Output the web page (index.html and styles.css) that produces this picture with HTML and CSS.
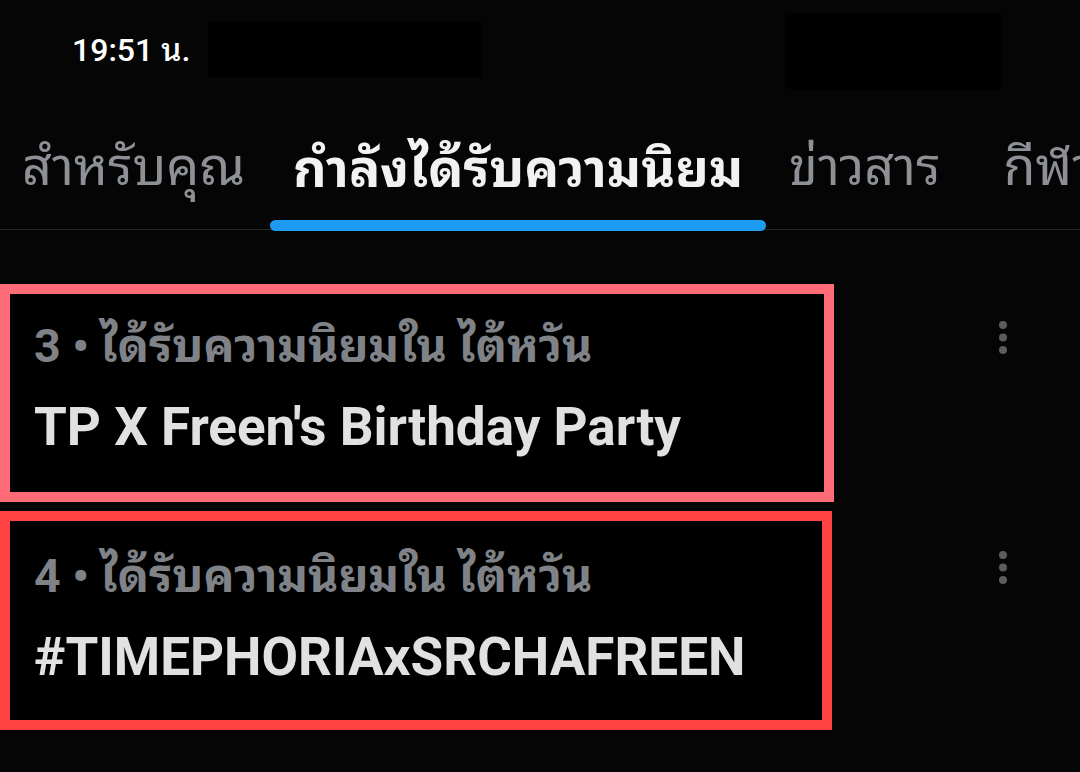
FILE: index.html
```html
<!DOCTYPE html>
<html lang="th">
<head>
<meta charset="utf-8">
<title>กำลังได้รับความนิยม</title>
<link rel="stylesheet" href="styles.css">
</head>
<body>
<div class="screen">
  <div class="status">
    <span class="time">19:51 น.</span>
    <span class="redact redact-a"></span>
    <span class="redact redact-b"></span>
  </div>

  <nav class="tabs">
    <div class="tab"><span class="tab-label">สำหรับคุณ</span></div>
    <div class="tab active"><span class="tab-label">กำลังได้รับความนิยม</span><span class="tab-bar"></span></div>
    <div class="tab"><span class="tab-label">ข่าวสาร</span></div>
    <div class="tab tab-sport"><span class="tab-label">กีฬา</span></div>
  </nav>

  <section class="trends">
    <div class="trend">
      <div class="trend-box pink">
        <div class="meta">3 • ได้รับความนิยมใน ไต้หวัน</div>
        <div class="title">TP X Freen's Birthday Party</div>
      </div>
      <div class="more">
        <svg width="8" height="34" viewBox="0 0 8 34"><circle cx="4" cy="4" r="4"/><circle cx="4" cy="16.5" r="4"/><circle cx="4" cy="29" r="4"/></svg>
      </div>
    </div>
    <div class="trend second">
      <div class="trend-box red">
        <div class="meta">4 • ได้รับความนิยมใน ไต้หวัน</div>
        <div class="title">#TIMEPHORIAxSRCHAFREEN</div>
      </div>
      <div class="more">
        <svg width="8" height="34" viewBox="0 0 8 34"><circle cx="4" cy="4" r="4"/><circle cx="4" cy="16.5" r="4"/><circle cx="4" cy="29" r="4"/></svg>
      </div>
    </div>
  </section>
</div>
</body>
</html>
```

FILE: styles.css
```css
* { box-sizing: border-box; }

html, body {
  margin: 0;
  padding: 0;
  background: #050505;
}

.screen {
  width: 1080px;
  height: 772px;
  overflow: hidden;
  position: relative;
  font-family: Roboto, "Noto Sans Thai Looped", "Noto Sans Thai", Loma, Garuda, "DejaVu Sans", sans-serif;
  color: #e6e6e6;
}

.status {
  height: 95px;
  display: flex;
  align-items: flex-start;
  padding-left: 72px;
}

.time {
  margin-top: 30px;
  font-size: 32px;
  font-weight: 500;
  line-height: 40px;
  color: #ffffff;
}

.redact {
  background: #000;
  display: block;
  flex-shrink: 0;
}

.redact-a {
  margin-top: 22px;
  margin-left: 18px;
  width: 274px;
  height: 55px;
}

.redact-b {
  margin-top: 13px;
  margin-left: 304px;
  width: 215px;
  height: 76px;
}

.tabs {
  display: flex;
  align-items: flex-end;
  height: 135px;
  border-bottom: 1px solid #262626;
  white-space: nowrap;
}

.tab {
  display: flex;
  flex-direction: column;
  align-items: stretch;
  padding: 0 23px;
  flex-shrink: 0;
}

.tab:first-child { padding-left: 22px; }

.tab-label {
  font-size: 52px;
  line-height: 70px;
  color: #8d9095;
  padding-bottom: 26px;
}

.tab.active {
  padding: 0;
  margin-left: 2px;
}

.tab.active .tab-label {
  color: #f2f2f2;
  font-weight: 700;
  padding: 0 23px 15px;
}

.tab-bar {
  display: block;
  height: 11px;
  margin-bottom: -2px;
  border-radius: 6px;
  background: #1d9bf0;
}

.tab-sport { padding-left: 40px; }

.trends {
  padding-top: 54px;
  display: flex;
  flex-direction: column;
  gap: 9px;
}

.trend {
  display: flex;
  align-items: flex-start;
}

.trend-box {
  width: 834px;
  height: 218px;
  border: 10px solid;
  background: #000;
  padding: 22px 24px 0;
}

.trend-box.pink { border-color: #ff6b76; }
.trend-box.red { border-color: #ff4343; width: 832px; height: 219px; padding-top: 25px; }

.meta {
  font-size: 46.5px;
  font-weight: 700;
  line-height: 60px;
  color: #7f8388;
}

.title {
  margin-top: 18px;
  font-size: 53px;
  font-weight: 700;
  line-height: 66px;
  color: #e1e1e1;
}

.more {
  margin-left: 165px;
  margin-top: 37px;
  display: flex;
}

.trend-box.red + .more { margin-left: 167px; margin-top: 40px; }

.more svg { fill: #5c5c5c; }
```
